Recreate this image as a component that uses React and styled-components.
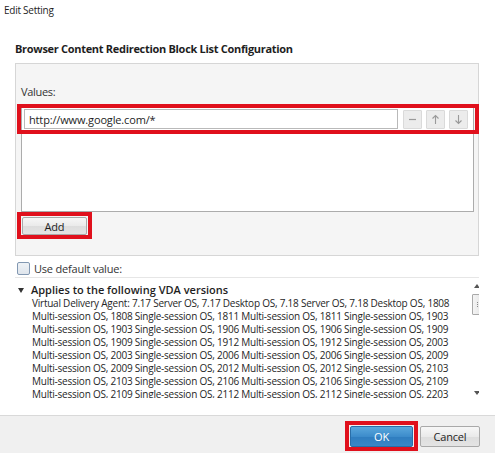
import React from 'react'
import styled, {createGlobalStyle} from 'styled-components'

const GlobalStyle = createGlobalStyle`
    html, body {
        margin: 0;
        padding: 0;
        background: #ffffff;
    }

    body {
        font-family: 'Open Sans', 'Noto Sans', sans-serif;
        font-size: 11px;
        color: #1e1e1e;
    }
`

const annotationRed = '#e0101c'

const Dialog = styled.div`
    width: 495px;
    height: 453px;
    display: flex;
    flex-direction: column;
    overflow: hidden;
    background: #ffffff;
`

const Caption = styled.div`
    height: 16px;
    line-height: 16px;
    padding: 2px 5px 0 4px;
    font-size: 10px;
    letter-spacing: -0.25px;
`

const Body = styled.div`
    display: flex;
    flex-direction: column;
    padding: 0 16px 0 15px;
`

const Heading = styled.h1`
    margin: 23px 0 0;
    font-size: 11px;
    font-weight: 700;
    line-height: 16px;
    letter-spacing: -0.3px;
`

const Panel = styled.div`
    display: flex;
    flex-direction: column;
    margin-top: 6px;
    padding: 20px 4px 20px 5px;
    background: #f5f5f5;
    border: 1px solid #d6d6d6;
`

const FieldLabel = styled.div`
    line-height: 16px;
    letter-spacing: -0.3px;
    color: #333;
`

const ValueList = styled.div`
    margin-top: 5px;
    height: 105px;
    background: #ffffff;
    border: 1px solid #acacac;
`

// red frame drawn over a control; offsets say how far it sits outside it
const Highlight = styled.div`
    position: relative;

    &::after {
        content: '';
        position: absolute;
        top: ${p => p.$top}px;
        right: ${p => p.$right}px;
        bottom: ${p => p.$bottom}px;
        left: ${p => p.$left}px;
        border: 4px solid ${annotationRed};
        pointer-events: none;
    }
`

const ValueRow = styled.div`
    display: flex;
    align-items: center;
    gap: 4px;
    padding: 3px 5px 3px 2px;
`

const ValueInput = styled.input`
    flex: 1;
    height: 20px;
    box-sizing: border-box;
    margin: 0 1px 0 0;
    padding: 0 4px;
    border: 1px solid #b9b9b9;
    font: inherit;
    letter-spacing: -0.15px;
    color: #1e1e1e;
    outline: none;
`

const IconButton = styled.button`
    width: 19px;
    height: 19px;
    padding: 0;
    display: flex;
    align-items: center;
    justify-content: center;
    background: #ececec;
    border: 1px solid #dadada;
    border-radius: 1px;

    svg {
        display: block;
    }
`

const AddWrap = styled(Highlight)`
    align-self: flex-start;
    margin-top: 5px;
    margin-left: 1px;
    width: 65px;
`

const PushButton = styled.button`
    display: block;
    height: ${p => p.$height || 21}px;
    width: ${p => p.$width}px;
    box-sizing: border-box;
    padding: 0;
    font-family: inherit;
    font-size: 11px;
    letter-spacing: -0.2px;
    border-radius: 2px;
    color: ${p => (p.$primary ? '#ffffff' : '#1e1e1e')};
    border: 1px solid ${p => (p.$primary ? '#2a6ea8' : '#a9a9a9')};
    background: ${p =>
        p.$primary
            ? 'linear-gradient(#5aa7dc, #3d8ccb 50%, #2f7dbf 51%, #3a87c6)'
            : 'linear-gradient(#f7f7f7, #eaeaea 50%, #dddddd 51%, #e4e4e4)'};
`

const DefaultRow = styled.label`
    display: flex;
    align-items: center;
    gap: 4px;
    margin-top: 3px;
    padding: 0 2px;
    height: 18px;
    border-bottom: 1px solid #e6e6e6;
    letter-spacing: -0.2px;
    color: #333;
`

const CheckBox = styled.span`
    width: 11px;
    height: 11px;
    border: 1px solid #8298b2;
    border-radius: 2px;
    background: linear-gradient(#eef2f6, #dfe5ec);
`

const Applies = styled.div`
    display: flex;
    height: 115px;
    margin-top: 5px;
    overflow: hidden;
`

const AppliesText = styled.div`
    flex: 1;
    padding-left: 3px;
`

const AppliesTitle = styled.div`
    display: flex;
    align-items: center;
    gap: 7px;
    line-height: 14px;
    font-weight: 600;
`

const Caret = styled.span`
    width: 0;
    height: 0;
    border-left: 3.5px solid transparent;
    border-right: 3.5px solid transparent;
    border-top: 5px solid #333;
`

const VersionLine = styled.div`
    padding-left: 14px;
    font-size: 10px;
    line-height: 13px;
    white-space: nowrap;
    letter-spacing: -0.23px;
    color: #262626;
`

const ScrollBar = styled.div`
    width: 12px;
    margin-right: -4px;
    display: flex;
    flex-direction: column;
    align-items: center;
    padding-top: 1px;
`

const ScrollArrow = styled.span`
    width: 0;
    height: 0;
    margin-top: ${p => (p.$up ? 0 : 'auto')};
    margin-bottom: ${p => (p.$up ? 0 : '3px')};
    border-left: 3px solid transparent;
    border-right: 3px solid transparent;
    ${p => (p.$up ? 'border-bottom: 4px solid #555;' : 'border-top: 4px solid #555;')}
`

const ScrollThumb = styled.div`
    margin-top: 6px;
    width: 8px;
    height: 19px;
    border: 1px solid #a9a9a9;
    border-radius: 1px;
    background: linear-gradient(90deg, #f4f4f4, #e6e6e6);
    display: flex;
    align-items: center;
    justify-content: center;

    &::before {
        content: '';
        width: 1px;
        height: 5px;
        background: repeating-linear-gradient(#888 0 1px, transparent 1px 2px);
    }
`

const Footer = styled.div`
    margin-top: auto;
    height: 38px;
    border-top: 1px solid #d9d9d9;
    background: #f0f0f0;
    display: flex;
    justify-content: flex-end;
    align-items: flex-start;
    gap: 7px;
    padding: 10px 15px 0 0;
    box-sizing: border-box;
`

const versions = [
    'Virtual Delivery Agent: 7.17 Server OS, 7.17 Desktop OS, 7.18 Server OS, 7.18 Desktop OS, 1808',
    'Multi-session OS, 1808 Single-session OS, 1811 Multi-session OS, 1811 Single-session OS, 1903',
    'Multi-session OS, 1903 Single-session OS, 1906 Multi-session OS, 1906 Single-session OS, 1909',
    'Multi-session OS, 1909 Single-session OS, 1912 Multi-session OS, 1912 Single-session OS, 2003',
    'Multi-session OS, 2003 Single-session OS, 2006 Multi-session OS, 2006 Single-session OS, 2009',
    'Multi-session OS, 2009 Single-session OS, 2012 Multi-session OS, 2012 Single-session OS, 2103',
    'Multi-session OS, 2103 Single-session OS, 2106 Multi-session OS, 2106 Single-session OS, 2109',
    'Multi-session OS, 2109 Single-session OS, 2112 Multi-session OS, 2112 Single-session OS, 2203'
]

const Minus = () =>
    <svg width="9" height="9" viewBox="0 0 9 9">
        <path d="M1 4.5h7" stroke="#9a9a9a" strokeWidth="1.2" />
    </svg>

const Arrow = ({down}) =>
    <svg width="9" height="11" viewBox="0 0 9 11" style={down ? {transform: 'rotate(180deg)'} : undefined}>
        <path d="M4.5 10V1.5M1.5 4.5l3-3 3 3" stroke="#9a9a9a" strokeWidth="1.1" fill="none" />
    </svg>

const App = () =>
    <Dialog>
        <GlobalStyle />
        <Caption>Edit Setting</Caption>
        <Body>
            <Heading>Browser Content Redirection Block List Configuration</Heading>
            <Panel>
                <FieldLabel>Values:</FieldLabel>
                <ValueList>
                    <Highlight $top={-2} $right={-6} $bottom={-2} $left={-5}>
                        <ValueRow>
                            <ValueInput defaultValue="http://www.google.com/*" />
                            <IconButton aria-label="Remove"><Minus /></IconButton>
                            <IconButton aria-label="Move up"><Arrow /></IconButton>
                            <IconButton aria-label="Move down"><Arrow down /></IconButton>
                        </ValueRow>
                    </Highlight>
                </ValueList>
                <AddWrap $top={-5} $right={-5} $bottom={-4} $left={-5}>
                    <PushButton $width={65} $height={18}>Add</PushButton>
                </AddWrap>
            </Panel>
            <DefaultRow>
                <CheckBox />
                Use default value:
            </DefaultRow>
            <Applies>
                <AppliesText>
                    <AppliesTitle>
                        <Caret />
                        Applies to the following VDA versions
                    </AppliesTitle>
                    {versions.map(line => <VersionLine key={line}>{line}</VersionLine>)}
                </AppliesText>
                <ScrollBar>
                    <ScrollArrow $up />
                    <ScrollThumb />
                    <ScrollArrow />
                </ScrollBar>
            </Applies>
        </Body>
        <Footer>
            <Highlight $top={-5} $right={-5} $bottom={-4} $left={-5}>
                <PushButton $primary $width={63}>OK</PushButton>
            </Highlight>
            <PushButton $width={60}>Cancel</PushButton>
        </Footer>
    </Dialog>

export default App
